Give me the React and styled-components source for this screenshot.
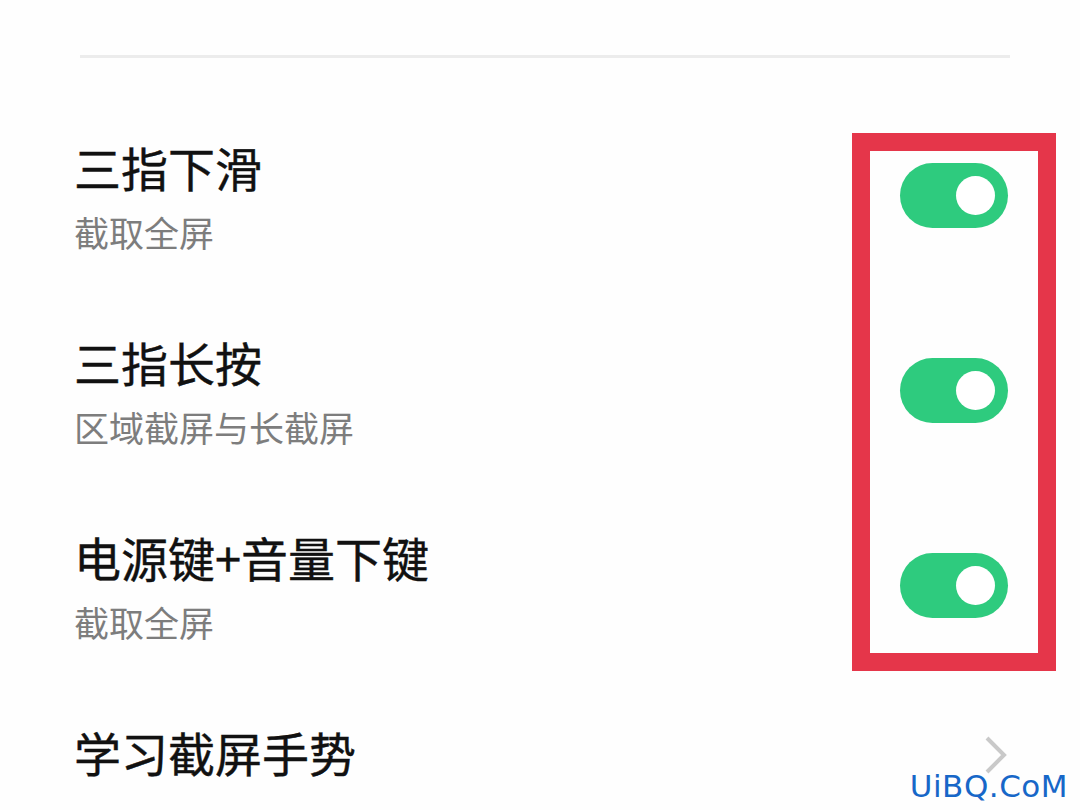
import React from "react";
import styled, { createGlobalStyle } from "styled-components";

const GlobalStyle = createGlobalStyle`
  html, body {
    margin: 0;
    padding: 0;
    background: #fefefe;
  }
  body {
    font-family: "Noto Sans CJK SC", "Noto Sans", sans-serif;
  }
`;

const items = [
  { title: "三指下滑", sub: "截取全屏", toggle: true },
  { title: "三指长按", sub: "区域截屏与长截屏", toggle: true },
  { title: "电源键+音量下键", sub: "截取全屏", toggle: true },
];

const Switch = ({ on }) => (
  <StyledSwitch $on={on}>
    <span className='knob' />
  </StyledSwitch>
);

const App = () => {
  return (
    <>
      <GlobalStyle />
      <Page>
        <Divider />
        <List>
          {items.map((item) => (
            <Row key={item.title}>
              <TextBlock>
                <Title>{item.title}</Title>
                <Sub>{item.sub}</Sub>
              </TextBlock>
              <Switch on={item.toggle} />
            </Row>
          ))}
          <LinkRow>
            <Title>学习截屏手势</Title>
            <Chevron viewBox='0 0 24 40'>
              <polyline points='3,3 20,20 3,37' />
            </Chevron>
          </LinkRow>
          <Highlight />
        </List>
        <Watermark>UiBQ.CoM</Watermark>
      </Page>
    </>
  );
};

const Page = styled.main`
  position: relative;
  width: 1080px;
  height: 810px;
  overflow: hidden;
  padding-top: 55px;
  box-sizing: border-box;
`;

const Divider = styled.div`
  margin-left: 80px;
  width: 930px;
  height: 3px;
  background: #ececec;
  filter: blur(0.6px);
`;

const List = styled.section`
  position: relative;
  margin-top: 45px;
`;

const Row = styled.div`
  display: flex;
  align-items: center;
  justify-content: space-between;
  height: 195px;
  padding: 0 72px 0 74px;
`;

const TextBlock = styled.div`
  display: flex;
  flex-direction: column;
  gap: 15px;
  margin-bottom: 8px;
`;

const Title = styled.p`
  margin: 0;
  font-size: 47px;
  line-height: 56px;
  color: #111;
  white-space: nowrap;
  -webkit-text-stroke: 0.4px #111;
`;

const Sub = styled.p`
  margin: 0;
  font-size: 35px;
  line-height: 44px;
  color: #7d7d7d;
  white-space: nowrap;
`;

const StyledSwitch = styled.div`
  display: flex;
  align-items: center;
  justify-content: ${({ $on }) => ($on ? "flex-end" : "flex-start")};
  width: 108px;
  height: 65px;
  padding: 0 13px;
  box-sizing: border-box;
  border-radius: 33px;
  background: ${({ $on }) => ($on ? "#2ecb7e" : "#d5d5d5")};
  margin-bottom: 10px;

  .knob {
    width: 39px;
    height: 39px;
    border-radius: 50%;
    background: #fff;
  }
`;

const LinkRow = styled.div`
  display: flex;
  align-items: center;
  justify-content: space-between;
  padding: 36px 72px 0 74px;
`;

const Chevron = styled.svg`
  width: 24px;
  height: 40px;
  margin-top: 6px;
  fill: none;
  stroke: #c9c9c9;
  stroke-width: 4;
`;

const Highlight = styled.div`
  position: absolute;
  left: 852px;
  top: 30px;
  width: 204px;
  height: 538px;
  box-sizing: border-box;
  border: 18px solid #e5364a;
  pointer-events: none;
`;

const Watermark = styled.span`
  position: absolute;
  right: 12px;
  bottom: 8px;
  font-family: "DejaVu Sans", sans-serif;
  font-size: 31px;
  line-height: 1;
  color: #1767c8;
  letter-spacing: 0.5px;
`;

export default App;
